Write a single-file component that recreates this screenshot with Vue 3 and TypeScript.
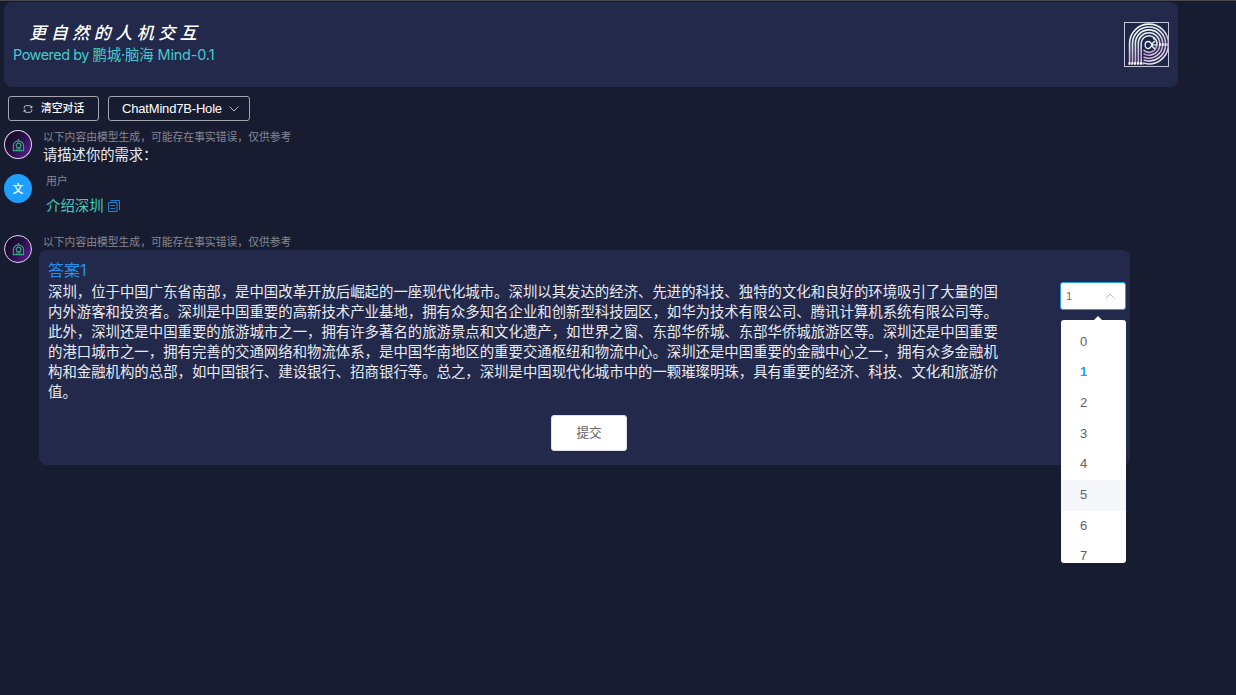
<script setup lang="ts">
const options: number[] = [0, 1, 2, 3, 4, 5, 6, 7]
const selected = 1
const hovered = 5
const notice = '以下内容由模型生成，可能存在事实错误，仅供参考'
const answer: string[] = [
  '深圳，位于中国广东省南部，是中国改革开放后崛起的一座现代化城市。深圳以其发达的经济、先进的科技、独特的文化和良好的环境吸引了大量的国',
  '内外游客和投资者。深圳是中国重要的高新技术产业基地，拥有众多知名企业和创新型科技园区，如华为技术有限公司、腾讯计算机系统有限公司等。',
  '此外，深圳还是中国重要的旅游城市之一，拥有许多著名的旅游景点和文化遗产，如世界之窗、东部华侨城、东部华侨城旅游区等。深圳还是中国重要',
  '的港口城市之一，拥有完善的交通网络和物流体系，是中国华南地区的重要交通枢纽和物流中心。深圳还是中国重要的金融中心之一，拥有众多金融机',
  '构和金融机构的总部，如中国银行、建设银行、招商银行等。总之，深圳是中国现代化城市中的一颗璀璨明珠，具有重要的经济、科技、文化和旅游价',
  '值。',
]
const rings: number[] = [7.8, 10.7, 13.6, 16.5, 19.4]
</script>

<template>
  <div class="page">
    <header class="header">
      <div class="brand">
        <div class="title"><span v-for="c in '更自然的人机交互'" :key="c">{{ c }}</span></div>
        <div class="powered"><span class="by">Powered by </span>鹏城·脑海 Mind-0.1</div>
      </div>
      <svg class="logo" viewBox="0 0 45 45">
        <defs>
          <linearGradient id="ringStroke" gradientUnits="userSpaceOnUse" x1="8" y1="0" x2="30" y2="44">
            <stop offset="0" stop-color="#fff" />
            <stop offset=".4" stop-color="#dcefed" />
            <stop offset=".72" stop-color="#c9a5d4" />
            <stop offset="1" stop-color="#f4f4fa" />
          </linearGradient>
        </defs>
        <rect x=".5" y=".5" width="44" height="44" fill="#20264a" stroke="#c2c7d6" />
        <g fill="none" stroke="url(#ringStroke)" stroke-width="1.600">
          <path
            v-for="r in rings"
            :key="r"
            :d="`M${25 - r} 42V21.500A${r} ${r} 0 0 1 ${25 + r} 21.500M${25 + r} 22.500A${r} ${r} 0 0 1 19.500 ${22.5 + Math.sqrt(r * r - 30.25)}`"
          />
        </g>
        <path d="M35 22.500h9M4.500 41.500h15" stroke="#fff" stroke-width="2.400" stroke-dasharray="2 .8" />
        <path
          d="M31 26.500c-3.500 0-2.500-7-6.500-7-4.500 0-4.500 7 0 7 3.500 0 3-7 6.500-7M27.500 22.800H33c.3-3.500-1.300-6-4-6.500"
          fill="none"
          stroke="#e3f5f2"
          stroke-width="1.300"
        />
      </svg>
    </header>

    <div class="toolbar">
      <button class="tool clear">
        <svg class="refresh" viewBox="0 0 12 12">
          <path d="M1.500 5.500V4.300A2.300 2.300 0 0 1 3.800 2H8a2.300 2.300 0 0 1 2.300 2.300M10.500 6.500v1.200A2.300 2.300 0 0 1 8.200 10H4a2.300 2.300 0 0 1-2.300-2.300M8.500 4.500h2.200V2.300M3.500 7.500H1.300v2.200" />
        </svg>
        <span>清空对话</span>
      </button>
      <button class="tool model">
        <span>ChatMind7B-Hole</span>
        <svg class="chevron" viewBox="0 0 10 6"><path d="M.7.700 5 5 9.300.700" /></svg>
      </button>
    </div>

    <div class="message greeting">
      <div class="avatar bot">
        <svg viewBox="0 0 14 14"><path d="M1.500 12.500V7.500a5.500 5.500 0 0 1 11 0v5zM7 2V0M4 10.800h6" /><circle cx="7" cy="7" r="2.500" /></svg>
      </div>
      <div class="content">
        <div class="notice">{{ notice }}</div>
        <div class="prompt">请描述你的需求：</div>
      </div>
    </div>

    <div class="message question">
      <div class="avatar user">文</div>
      <div class="content">
        <div class="notice name">用户</div>
        <div class="query">
          <span>介绍深圳</span>
          <svg class="copy" viewBox="0 0 12 12"><path d="M.5 2.500h8.500v9H.5zM2.500.600h9v9.400M2.500 5.500h4.500M2.500 8.500h4.500" /></svg>
        </div>
      </div>
    </div>

    <div class="message reply">
      <div class="avatar bot">
        <svg viewBox="0 0 14 14"><path d="M1.500 12.500V7.500a5.500 5.500 0 0 1 11 0v5zM7 2V0M4 10.800h6" /><circle cx="7" cy="7" r="2.500" /></svg>
      </div>
      <div class="content">
        <div class="notice">{{ notice }}</div>
        <section class="card">
          <div class="answer">
            <h3>答案1</h3>
            <p v-for="line in answer" :key="line">{{ line }}</p>
          </div>
          <div class="score">
            <div class="select">
              <span>1</span>
              <svg class="chevron" viewBox="0 0 10 6"><path d="M.7 5.300 5 1 9.300 5.300" /></svg>
            </div>
            <div class="dropdown">
              <ul>
                <li v-for="n in options" :key="n" :class="{ selected: n === selected, hovered: n === hovered }">{{ n }}</li>
              </ul>
            </div>
          </div>
          <button class="submit">提交</button>
        </section>
      </div>
    </div>
  </div>
</template>

<style>
body {
  background: #181c30;
}
</style>

<style scoped>
.page {
  box-sizing: border-box;
  width: 1236px;
  height: 695px;
  overflow: hidden;
  border-top: 1px solid #47484d;
  background: #181c30;
  color: #e8eaf4;
  font-family: Inter, 'Noto Sans CJK SC', sans-serif;
}
svg {
  display: block;
  flex: none;
}
button {
  font-family: inherit;
  padding: 0;
}
.header {
  box-sizing: border-box;
  display: flex;
  justify-content: space-between;
  width: 1174px;
  height: 85px;
  margin: 1px 0 0 4px;
  padding: 20px 9px 0 9px;
  border-radius: 8px;
  background: #23294a;
}
.title {
  display: flex;
  padding-left: 14px;
  height: 23px;
  color: #fff;
  font: italic 500 17px/24px 'Liberation Serif', 'Noto Sans CJK SC', serif;
}
.title span {
  width: 21.5px;
  text-align: center;
}
.powered {
  color: #45c9cf;
  font-size: 14.4px;
  line-height: 19px;
  letter-spacing: -0.13px;
  white-space: nowrap;
}
.by {
  letter-spacing: -0.45px;
}
.logo {
  width: 45px;
  height: 45px;
}
.toolbar {
  display: flex;
  gap: 9px;
  margin: 9px 0 0 8px;
}
.tool {
  box-sizing: border-box;
  display: flex;
  align-items: center;
  height: 25px;
  border: 1px solid #a3a5b0;
  border-radius: 3px;
  background: transparent;
  color: #fff;
}
.clear {
  width: 91px;
  padding-left: 14px;
  gap: 8px;
  font-size: 10.8px;
  font-weight: 500;
}
.clear span {
  padding-bottom: 3px;
}
.model {
  width: 142px;
  padding-left: 13px;
  gap: 7px;
  font-family: 'Liberation Sans', sans-serif;
  font-size: 13px;
  letter-spacing: -0.18px;
}
.refresh {
  width: 10px;
  height: 10px;
  fill: none;
  stroke: #d9dce8;
  stroke-width: 1;
}
.chevron {
  width: 10px;
  height: 6px;
  fill: none;
  stroke: #b7bac7;
  stroke-width: 1;
}
.message {
  display: flex;
  margin-left: 4px;
}
.avatar {
  box-sizing: border-box;
  display: flex;
  flex: none;
  align-items: center;
  justify-content: center;
  width: 28px;
  height: 29px;
  border-radius: 50%;
}
.bot {
  border: 1px solid #dcd3e8;
  background: linear-gradient(125deg, #160d2a 20%, #2d104e 55%, #6922a0);
}
.bot svg {
  width: 13px;
  height: 13px;
  margin-top: 1px;
  fill: none;
  stroke: #35a982;
  stroke-width: 1.2;
}
.user {
  padding-bottom: 2px;
  background: #1e9fff;
  color: #fff;
  font-size: 11px;
  font-weight: 500;
}
.content {
  padding-left: 7px;
}
.notice {
  height: 14px;
  padding-left: 4px;
  color: #858791;
  font-size: 10.8px;
  line-height: 16px;
  white-space: nowrap;
}
.greeting {
  height: 44px;
  margin-top: 9px;
}
.prompt {
  padding-left: 4px;
  font-size: 14.3px;
  line-height: 22px;
}
.question {
  height: 61px;
}
.name {
  padding-left: 7px;
}
.query {
  display: flex;
  align-items: center;
  gap: 4px;
  padding: 8px 0 0 7px;
  color: #45c9bd;
  font-size: 14.4px;
  line-height: 20px;
}
.copy {
  width: 12px;
  height: 12px;
  fill: none;
  stroke: #2484d0;
  stroke-width: 1;
}
.reply .avatar {
  height: 28px;
}
.card {
  box-sizing: border-box;
  display: grid;
  grid-template-columns: 1012px 66px;
  grid-template-rows: 165px 36px;
  width: 1091px;
  height: 215px;
  margin-top: 1px;
  padding-left: 9px;
  border-radius: 8px;
  background: #23294a;
}
.answer {
  padding-top: 10px;
}
h3 {
  margin: 0 0 2px;
  color: #2292ed;
  font-size: 16px;
  font-weight: 400;
  line-height: 20px;
}
p {
  margin: 0;
  font-size: 14.4px;
  line-height: 20px;
  white-space: nowrap;
}
.score {
  position: relative;
  padding-top: 32px;
}
.select {
  box-sizing: border-box;
  display: flex;
  align-items: center;
  justify-content: space-between;
  width: 66px;
  height: 28px;
  padding: 0 10px 0 5px;
  border: 1px solid #2d9ced;
  border-radius: 3px;
  background: #fff;
  color: #696b70;
  font: 11px 'Liberation Sans', sans-serif;
}
.dropdown {
  position: absolute;
  top: 70px;
  left: 1px;
  width: 65px;
  height: 243px;
}
.dropdown::before {
  content: '';
  position: absolute;
  top: -4px;
  left: 32px;
  border: solid transparent;
  border-width: 0 5px 5px;
  border-bottom-color: #fff;
}
ul {
  box-sizing: border-box;
  height: 243px;
  margin: 0;
  padding: 6.5px 0 0;
  overflow: hidden;
  border-radius: 3px;
  background: #fff;
  list-style: none;
}
li {
  box-sizing: border-box;
  height: 30.7px;
  padding-left: 19px;
  color: #606266;
  font: 13px/29px 'Liberation Sans', sans-serif;
}
.selected {
  color: #1e9fff;
  font-weight: 700;
}
.hovered {
  background: #f5f7fa;
}
.submit {
  grid-row: 2;
  justify-self: start;
  width: 76px;
  height: 36px;
  margin-left: 503px;
  padding-bottom: 3px;
  border: 1px solid #dcdfe6;
  border-radius: 3px;
  background: #fff;
  color: #606266;
  font-size: 12.6px;
}
</style>
